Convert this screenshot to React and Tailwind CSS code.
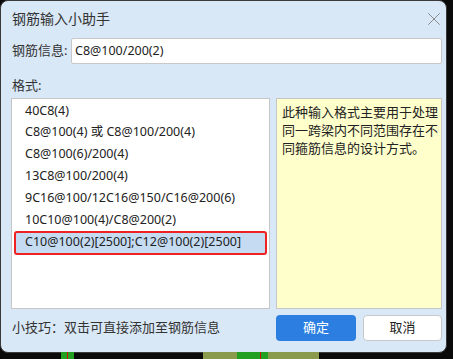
import { X } from "lucide-react";

const formats = [
  "40C8(4)",
  "C8@100(4) 或 C8@100/200(4)",
  "C8@100(6)/200(4)",
  "13C8@100/200(4)",
  "9C16@100/12C16@150/C16@200(6)",
  "10C10@100(4)/C8@200(2)",
  "C10@100(2)[2500];C12@100(2)[2500]",
];

export default function App() {
  const selected = 6;
  return (
    <div
      className="w-[453px] h-[359px] bg-[#0a0a0a] overflow-hidden flex flex-col text-[#333]"
      style={{ fontFamily: '"Noto Sans", "Noto Sans CJK SC", sans-serif' }}
    >
      {/* Dialog */}
      <div className="w-[447px] h-[353px] shrink-0 rounded-[8px] bg-[#d9e8f7] border border-[#3a3a3a] flex flex-col pl-[10px] pr-[4px]">
        <div className="h-[34px] flex items-center justify-between pl-[1px] pt-[1px]">
          <span className="text-[14px] text-[#333]">钢筋输入小助手</span>
          <X size={22} strokeWidth={0.9} className="text-[#7a7a7a] mr-[-3px]" />
        </div>

        <div className="flex items-center mt-[3px] h-[26px]">
          <span className="text-[13px] w-[60px] pl-[1px] text-[#333]">钢筋信息:</span>
          <div className="flex-1 h-[26px] bg-white border border-[#c8c8c8] rounded-[2px] flex items-center px-[3px] text-[12.5px] text-[#222]">
            C8@100/200(2)
          </div>
        </div>

        <div className="mt-[12px] h-[22px] text-[13px] pl-[1px] text-[#333]">格式:</div>

        <div className="flex gap-[6px] h-[211px]">
          <div className="w-[259px] bg-white border border-[#c6c6c6] pt-[1px] px-[2px]">
            {formats.map((f, i) => (
              <div
                key={f}
                className={
                  i === selected
                    ? "h-[24px] flex items-center pl-[9px] text-[12.5px] text-[#222] bg-[#c5dbf2] border-2 border-[#ee2222] rounded-[3px]"
                    : "h-[21.8px] flex items-center pl-[11px] text-[12.5px] text-[#222]"
                }
              >
                {f}
              </div>
            ))}
          </div>
          <div className="w-[166px] bg-[#ffffcc] border border-[#c6c6c6] pl-[5px] pr-[1px] pt-[4px] text-[13px] leading-[18px] text-[#222]">
            此种输入格式主要用于处理同一跨梁内不同范围存在不同箍筋信息的设计方式。
          </div>
        </div>

        <div className="flex items-center mt-[5px] h-[27px]">
          <span className="flex-1 text-[13px] pl-[1px] text-[#333]">小技巧：双击可直接添加至钢筋信息</span>
          <button className="w-[80px] h-[26px] rounded-[4px] bg-[#2c7fe0] text-white text-[13px]">确定</button>
          <button className="w-[79px] h-[26px] ml-[7px] rounded-[4px] bg-white border border-[#c8c8c8] text-[13px] text-[#222]">取消</button>
        </div>
      </div>

      {/* Background app peeking below */}
      <div className="flex h-[7px] mt-[-1px] relative">
        <div className="w-[61px]" />
        <div className="w-[13px] bg-[#22a022] flex justify-center">
          <div className="w-[1px] bg-[#cc1111]" />
        </div>
        <div className="w-[129px]" />
        <div className="w-[34px] bg-[#8b9b4e]" />
        <div className="w-[31px] bg-[#22a022] flex justify-end pr-[7px]">
          <div className="w-[1px] bg-[#cc1111]" />
        </div>
        <div className="w-[51px] bg-[#8b9b4e]" />
      </div>
    </div>
  );
}
